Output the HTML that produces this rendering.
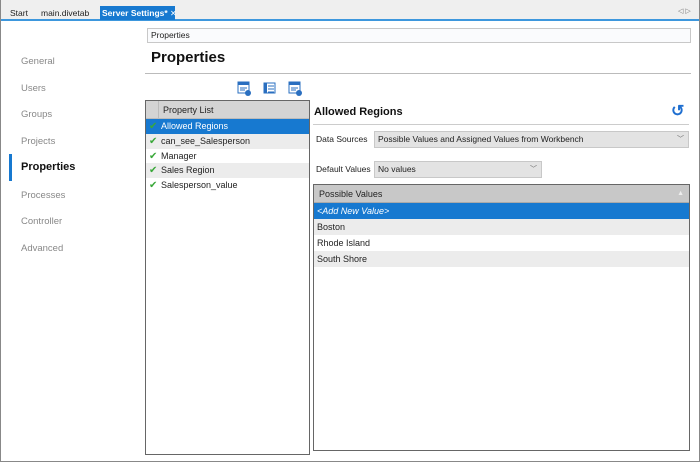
<!DOCTYPE html>
<html><head><style>
*{margin:0;padding:0;box-sizing:border-box}
body{width:700px;height:462px;position:relative;overflow:hidden;background:#fff;font-family:"Liberation Sans",sans-serif;font-size:9px;color:#222}
.a{position:absolute;white-space:nowrap}
.nav{position:absolute;left:21px;color:#888;font-size:9.5px}
.row{position:absolute;left:0;right:0;height:15px;line-height:15px;padding-left:15px;font-size:9px}
.ck{position:absolute;left:3px;top:0;color:#3aa83a;font-size:10px}
.gr{position:absolute;left:0;right:0;height:16px;line-height:16px;padding-left:3px;font-size:9px}
</style></head><body>
<div class="a" style="left:0;top:0;width:700px;height:462px;border:1px solid #888;border-top:none"></div>
<div class="a" style="left:1px;top:0;width:698px;height:19px;background:#efefef"></div>
<div class="a" style="left:1px;top:19px;width:698px;height:2px;background:#3d97dd"></div>
<div class="a" style="left:10px;top:8px;font-size:8.5px">Start</div>
<div class="a" style="left:41px;top:8px;font-size:8.5px">main.divetab</div>
<div class="a" style="left:100px;top:6px;width:75px;height:14px;background:#1779d0;color:#fff;font-weight:bold;font-size:8.5px;line-height:14px;padding-left:2px">Server Settings* <span style="font-weight:normal;font-size:8px">✕</span></div>
<div class="a" style="left:678px;top:7px;font-size:7px;color:#777">◁ ▷</div>
<div class="nav" style="top:56px">General</div>
<div class="nav" style="top:83px">Users</div>
<div class="nav" style="top:109px">Groups</div>
<div class="nav" style="top:136px">Projects</div>
<div class="a" style="left:9px;top:154px;width:3px;height:27px;background:#1779d0"></div>
<div class="a" style="left:21px;top:161px;font-weight:bold;font-size:11px;color:#111">Properties</div>
<div class="nav" style="top:190px">Processes</div>
<div class="nav" style="top:216px">Controller</div>
<div class="nav" style="top:243px">Advanced</div>
<div class="a" style="left:147px;top:28px;width:544px;height:15px;border:1px solid #c8c8c8;background:#fafbfd;font-size:8.5px;line-height:13px;padding-left:3px">Properties</div>
<div class="a" style="left:151px;top:49px;font-weight:bold;font-size:15px;color:#111">Properties</div>
<div class="a" style="left:145px;top:73px;width:546px;height:1px;background:#bbb"></div>
<svg class="a" style="left:237px;top:81px" width="70" height="16">
<rect x="1" y="1" width="11" height="11" fill="#fff" stroke="#2a6fc0"/><rect x="1" y="1" width="11" height="3" fill="#2a6fc0"/><path d="M3 7h7M3 9h5" stroke="#2a6fc0"/><circle cx="11" cy="12" r="3" fill="#2a6fc0"/>
<rect x="27" y="2" width="11" height="10" fill="#fff" stroke="#2a6fc0"/><rect x="27" y="2" width="3" height="10" fill="#2a6fc0"/><path d="M31 5h6M31 8h6M31 11h6" stroke="#2a6fc0"/>
<rect x="52" y="1" width="11" height="11" fill="#fff" stroke="#2a6fc0"/><rect x="52" y="1" width="11" height="3" fill="#2a6fc0"/><path d="M54 7h7M54 9h5" stroke="#2a6fc0"/><circle cx="62" cy="12" r="3" fill="#2a6fc0"/>
</svg>
<div class="a" style="left:145px;top:100px;width:165px;height:355px;border:1px solid #666;background:#fff">
<div class="a" style="left:0;top:0;right:0;height:18px;background:#d4d4d4;border-bottom:1px solid #bbb"></div>
<div class="a" style="left:12px;top:0;width:1px;height:18px;background:#bbb"></div>
<div class="a" style="left:17px;top:4px;font-size:9px">Property List</div>
<div class="row" style="top:18px;background:#1779d0;color:#fff"><span class="ck">✔</span>Allowed Regions</div>
<div class="row" style="top:33px;background:#ececec"><span class="ck">✔</span>can_see_Salesperson</div>
<div class="row" style="top:48px"><span class="ck">✔</span>Manager</div>
<div class="row" style="top:62px;background:#ececec"><span class="ck">✔</span>Sales Region</div>
<div class="row" style="top:77px"><span class="ck">✔</span>Salesperson_value</div>
</div>
<div class="a" style="left:314px;top:106px;font-weight:bold;font-size:11px;color:#111">Allowed Regions</div>
<div class="a" style="left:671px;top:101px;font-size:16px;color:#1f6fd0;font-weight:bold">↺</div>
<div class="a" style="left:313px;top:124px;width:376px;height:1px;background:#ccc"></div>
<div class="a" style="left:316px;top:134px;font-size:8.5px">Data Sources</div>
<div class="a" style="left:374px;top:131px;width:315px;height:17px;background:#e3e3e3;border:1px solid #c8c8c8;font-size:8.5px;line-height:15px;padding-left:3px">Possible Values and Assigned Values from Workbench<span style="position:absolute;right:4px;color:#666;font-size:7px">﹀</span></div>
<div class="a" style="left:316px;top:164px;font-size:8.5px">Default Values</div>
<div class="a" style="left:374px;top:161px;width:168px;height:17px;background:#e3e3e3;border:1px solid #c8c8c8;font-size:8.5px;line-height:15px;padding-left:3px">No values<span style="position:absolute;right:4px;color:#666;font-size:7px">﹀</span></div>
<div class="a" style="left:313px;top:184px;width:377px;height:267px;border:1px solid #666;background:#fff">
<div class="gr" style="top:0;height:18px;line-height:18px;background:#c8c8c8;border-bottom:1px solid #aaa;padding-left:5px">Possible Values<span style="position:absolute;right:5px;color:#eee;font-size:7px">▲</span></div>
<div class="gr" style="top:18px;background:#1779d0;color:#fff;font-style:italic">&lt;Add New Value&gt;</div>
<div class="gr" style="top:34px;background:#ececec">Boston</div>
<div class="gr" style="top:50px">Rhode Island</div>
<div class="gr" style="top:66px;background:#ececec">South Shore</div>
</div>
</body></html>
